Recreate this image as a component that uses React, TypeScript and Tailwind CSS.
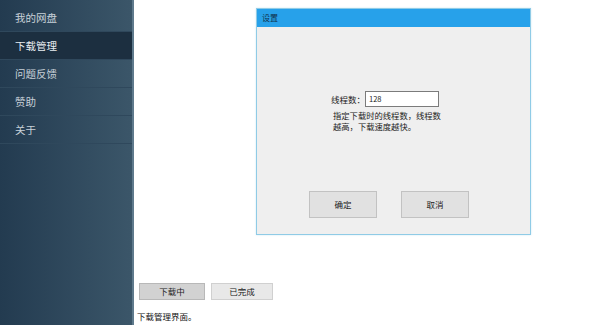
import React from "react";

const font = { fontFamily: '"Noto Sans CJK SC", "Noto Sans", sans-serif' };

export default function App() {
  const items = ["我的网盘", "下载管理", "问题反馈", "赞助", "关于"];
  return (
    <div className="flex w-[600px] h-[325px] bg-white overflow-hidden" style={font}>
      <div className="w-[134px] h-full bg-gradient-to-r from-[#233b50] to-[#3b5669] border-r-2 border-[#5f7a8c] pt-[4px] flex flex-col">
        {items.map((t, i) => (
          <div
            key={t}
            className={`h-[28px] flex items-center pl-[15px] text-[10.5px] border-b border-[#2f485c] ${
              i === 1 ? "bg-[#1c2f40] text-[#e8edf1]" : "text-[#c8d1d9]"
            }`}
          >
            {t}
          </div>
        ))}
      </div>
      <div className="flex-1 flex flex-col pt-[8px]">
        <div className="ml-[122px] w-[275px] h-[227px] border border-[#8fcbe6] shadow-[0_0_2px_#cfe8f3] bg-[#efefef] flex flex-col">
          <div className="h-[18px] bg-[#27a1ea] flex items-center pl-[5px] text-[8px] text-[#10324d]">设置</div>
          <div className="flex-1 flex flex-col items-start pl-[74px] pt-[64px]">
            <div className="flex items-center text-[8.5px] text-[#222]">
              <span>线程数：</span>
              <div className="w-[74px] h-[16px] bg-white border border-[#7b7b7b] text-[7.5px] flex items-center pl-[3px]">128</div>
            </div>
            <div className="mt-[3px] ml-[2px] w-[112px] text-[8.3px] leading-[11px] text-[#222]">
              指定下载时的线程数，线程数越高，下载速度越快。
            </div>
            <div className="flex gap-[24px] mt-[59px] -ml-[22px]">
              <div className="w-[68px] h-[27px] bg-[#e1e1e1] border border-[#c2c2c2] flex items-center justify-center text-[8.5px] text-[#222]">确定</div>
              <div className="w-[68px] h-[27px] bg-[#e1e1e1] border border-[#c2c2c2] flex items-center justify-center text-[8.5px] text-[#222]">取消</div>
            </div>
          </div>
        </div>
        <div className="flex gap-[6px] ml-[5px] mt-[48px]">
          <div className="w-[66px] h-[17px] bg-[#d2d2d2] border border-[#b8b8b8] flex items-center justify-center text-[8.5px] text-[#222]">下载中</div>
          <div className="w-[62px] h-[17px] bg-[#e8e8e8] border border-[#d0d0d0] flex items-center justify-center text-[8.5px] text-[#222]">已完成</div>
        </div>
        <div className="ml-[3px] mt-[10px] text-[8.5px] text-[#111]">下载管理界面。</div>
      </div>
    </div>
  );
}
